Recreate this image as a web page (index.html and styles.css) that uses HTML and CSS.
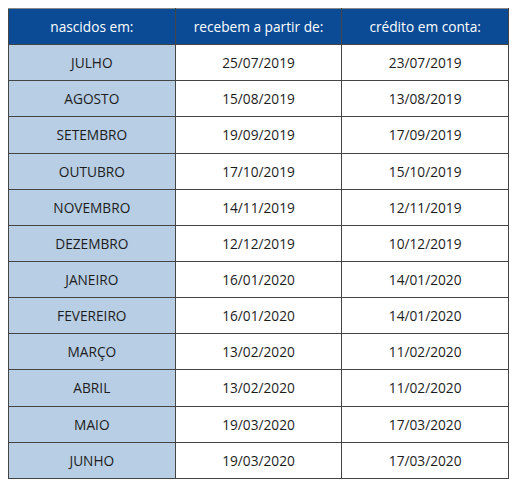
FILE: index.html
```html
<!DOCTYPE html>
<html>
<head>
<meta charset="utf-8">
<link rel="stylesheet" href="styles.css">
</head>
<body>
<table class="cal">
<thead>
<tr><th>nascidos em:</th><th>recebem a partir de:</th><th>crédito em conta:</th></tr>
</thead>
<tbody>
<tr><td class="m">JULHO</td><td>25/07/2019</td><td>23/07/2019</td></tr>
<tr><td class="m">AGOSTO</td><td>15/08/2019</td><td>13/08/2019</td></tr>
<tr><td class="m">SETEMBRO</td><td>19/09/2019</td><td>17/09/2019</td></tr>
<tr><td class="m">OUTUBRO</td><td>17/10/2019</td><td>15/10/2019</td></tr>
<tr><td class="m">NOVEMBRO</td><td>14/11/2019</td><td>12/11/2019</td></tr>
<tr><td class="m">DEZEMBRO</td><td>12/12/2019</td><td>10/12/2019</td></tr>
<tr><td class="m">JANEIRO</td><td>16/01/2020</td><td>14/01/2020</td></tr>
<tr><td class="m">FEVEREIRO</td><td>16/01/2020</td><td>14/01/2020</td></tr>
<tr><td class="m">MARÇO</td><td>13/02/2020</td><td>11/02/2020</td></tr>
<tr><td class="m">ABRIL</td><td>13/02/2020</td><td>11/02/2020</td></tr>
<tr><td class="m">MAIO</td><td>19/03/2020</td><td>17/03/2020</td></tr>
<tr><td class="m">JUNHO</td><td>19/03/2020</td><td>17/03/2020</td></tr>
</tbody>
</table>
</body>
</html>
```
FILE: styles.css
```css
body {
  margin: 8px;
  background: #ffffff;
  font-family: "Open Sans", "Liberation Sans", sans-serif;
}
.cal {
  border-collapse: collapse;
  width: 501px;
  table-layout: fixed;
  font-size: 13.7px;
  color: #1c1c1c;
}
.cal th,
.cal td {
  border: 1px solid #444444;
  height: 35.15px;
  padding: 0;
  text-align: center;
  vertical-align: middle;
  font-weight: normal;
}
.cal th {
  background: #0b4b95;
  color: #ffffff;
  border-top-color: #888888;
  border-bottom-color: #444444;
}
.cal td.m {
  background: #b8cee4;
}
```
